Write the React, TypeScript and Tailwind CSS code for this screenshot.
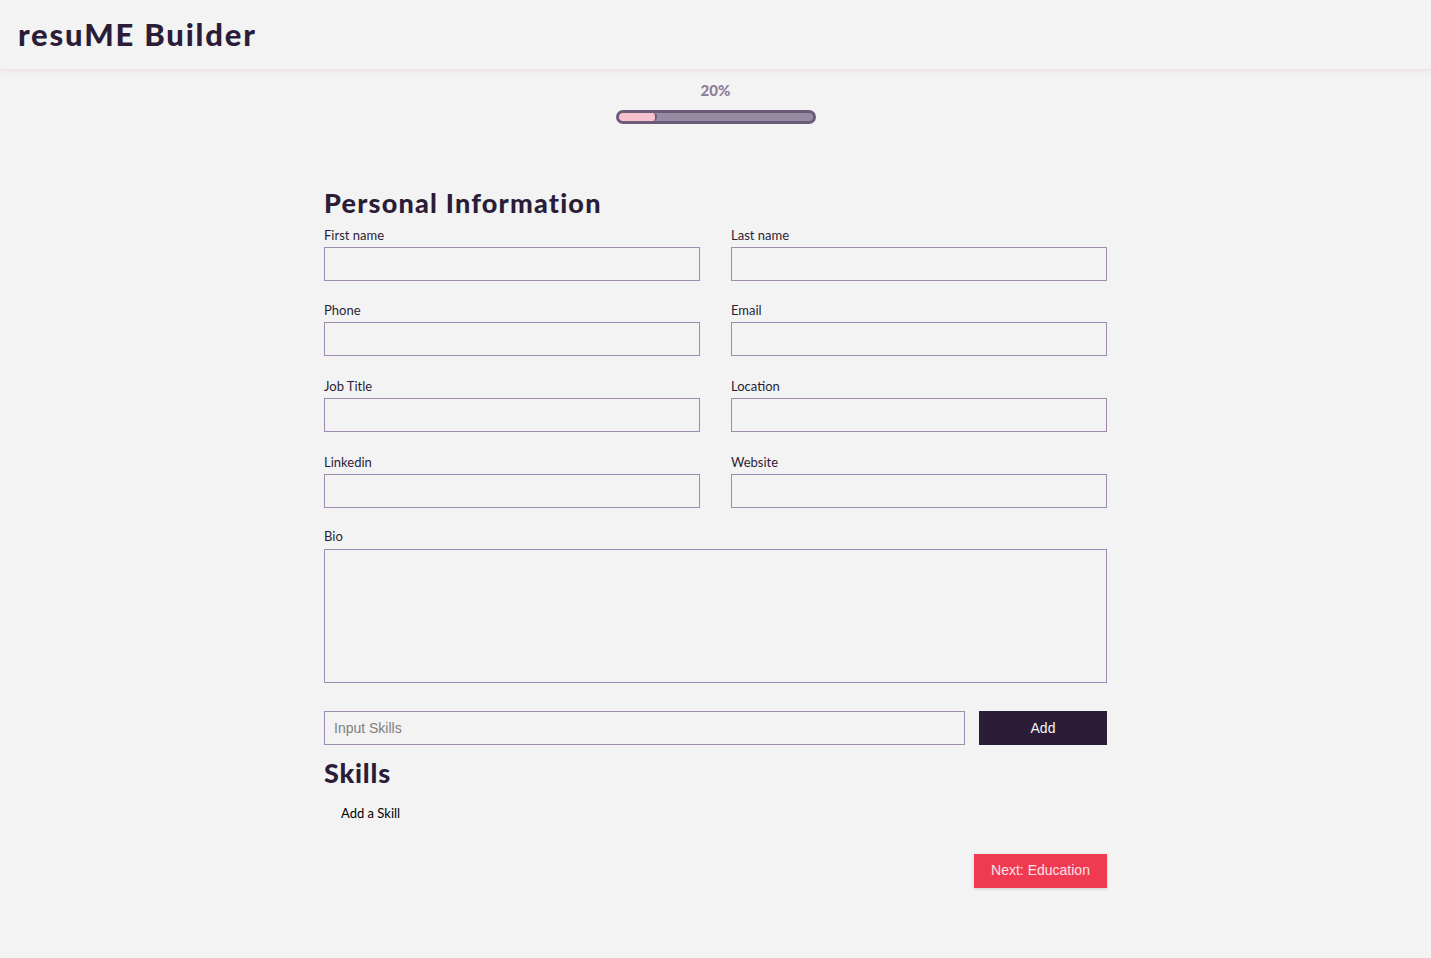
import React from "react"

const fields = [
  ["First name", "Last name"],
  ["Phone", "Email"],
  ["Job Title", "Location"],
  ["Linkedin", "Website"],
]

function Field({ label }: { label: string }) {
  return (
    <div className="flex flex-col">
      <label className="text-[13px] leading-[16px] text-[#2b1d38] mb-[4px]">{label}</label>
      <input className="h-[34px] w-full border border-[#9d8aae] bg-transparent outline-none px-2" />
    </div>
  )
}

export default function App() {
  return (
    <div className="min-h-[958px] bg-[#f3f3f3] font-['Lato',sans-serif] text-[#2b1d38]">
      <header className="h-[69px] flex items-center px-[18px] shadow-[0_1px_4px_rgba(240,190,200,0.6)]">
        <h1 className="text-[31px] font-black tracking-[1.8px] text-[#2b1d38]">resuME Builder</h1>
      </header>

      <div className="flex flex-col items-center pt-[10px]">
        <p className="text-[15px] font-black text-[#8e7e9a]">20%</p>
        <div className="mt-[8px] w-[200px] h-[14px] rounded-full border-[3px] border-[#6b5a78] bg-[#978aa3] overflow-hidden">
          <div className="h-full w-[38px] rounded-full bg-[#f7c2cd] border-r-[2px] border-[#6b5a78]" />
        </div>
      </div>

      <main className="w-[783px] mx-auto pt-[63px]">
        <h2 className="text-[27px] leading-[32px] font-black tracking-[1.2px] text-[#2b1d38]">Personal Information</h2>
        <div className="mt-[8px] flex flex-col gap-[21.7px]">
          {fields.map((row) => (
            <div key={row[0]} className="grid grid-cols-2 gap-[31px]">
              <Field label={row[0]} />
              <Field label={row[1]} />
            </div>
          ))}
          <div className="flex flex-col -mt-[1px]">
            <label className="text-[13px] leading-[16px] text-[#2b1d38] mb-[5px]">Bio</label>
            <textarea className="h-[134px] w-full border border-[#9d8aae] bg-transparent outline-none p-2 resize-none" />
          </div>
        </div>

        <div className="mt-[28px] flex gap-[14px]">
          <input
            placeholder="Input Skills"
            className="flex-1 h-[34px] border border-[#9d8aae] bg-transparent px-[9px] text-[14px] font-['Liberation_Sans',sans-serif] placeholder:text-[#808080] outline-none"
          />
          <button className="w-[128px] h-[34px] bg-[#2b1d38] text-[#f3f3f3] text-[14px] font-['Liberation_Sans',sans-serif]">
            Add
          </button>
        </div>

        <h2 className="mt-[12px] text-[27px] leading-[32px] font-black tracking-[0.8px] text-[#2b1d38]">Skills</h2>
        <p className="mt-[15px] ml-[17px] text-[13px] text-black">Add a Skill</p>

        <div className="mt-[30px] flex justify-end">
          <button className="w-[133px] h-[34px] bg-[#ef3a52] text-[#fbe3e6] text-[14px] font-['Liberation_Sans',sans-serif] shadow-[0_1px_3px_rgba(0,0,0,0.15)]">
            Next: Education
          </button>
        </div>
      </main>
    </div>
  )
}
